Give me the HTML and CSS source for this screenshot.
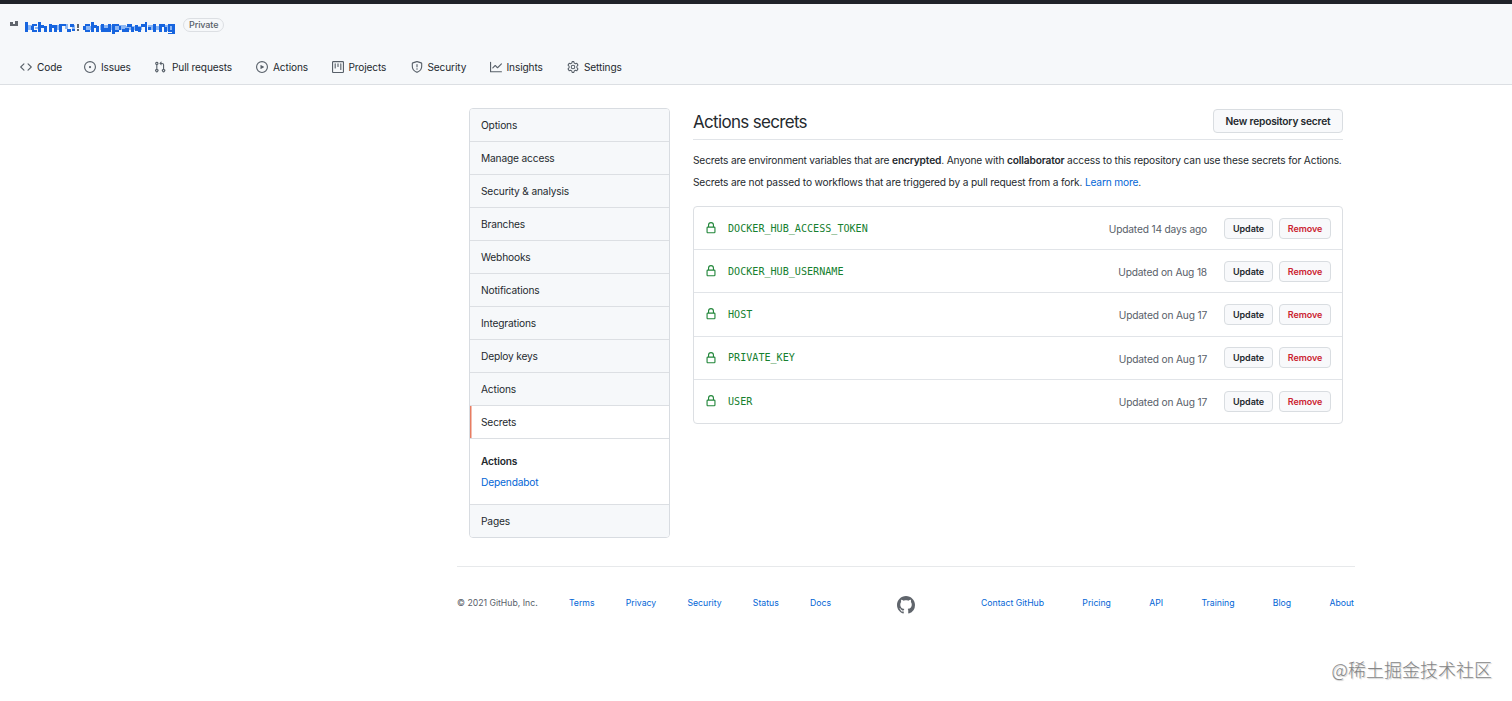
FILE: index.html
```html
<!DOCTYPE html>
<html lang="en">
<head>
<meta charset="utf-8">
<title>Actions secrets</title>
<link rel="stylesheet" href="styles.css">
</head>
<body>
<header class="repo-header">
  <div class="repo-title">
    <svg class="repo-name" width="166" height="16" viewBox="0 0 166 16" shape-rendering="crispEdges">
      <path fill="#60656c" d="M0 3h3v4H0zM5 2h3v5H5zM3 5h2v2H3zM67 5h2v4h-2zM67 10h2v2h-2z"/>
      <path fill="#8db7f3" d="M18 6h4v5h-4zM25 8h3v2h-3zM47 6h4v5h-4zM55 5h3v5h-3zM62 6h3v4h-3zM76 7h5v4h-5zM90 6h26v5H90zM115 7h17v4h-17zM138 6h5v5h-5zM146 7h3v4h-3zM155 6h9v6h-9z"/>
      <path fill="#1765df" d="M15 3h3v10h-3zM22 5h5v2h-5zM21 7h3v4h-3zM22 11h5v2h-5zM28 3h3v10h-3zM31 6h3v3h-3zM34 7h3v6h-3zM39 5h3v8h-3zM42 6h5v3h-5zM44 9h3v4h-3zM49 5h3v8h-3zM52 5h4v2h-4zM57 10h4v3h-4zM60 5h4v3h-4zM62 10h3v2h-3zM75 5h5v2h-5zM73 7h3v4h-3zM75 11h5v2h-5zM81 3h3v10h-3zM84 6h3v3h-3zM86 7h3v6h-3zM91 5h3v8h-3zM94 9h5v4h-5zM98 5h3v8h-3zM102 5h3v10h-3zM105 5h4v2h-4zM105 11h4v2h-4zM109 7h2v4h-2zM112 10h4v3h-4zM117 5h5v3h-5zM115 9h4v4h-4zM121 8h3v5h-3zM125 6h3v6h-3zM128 8h3v5h-3zM131 5h4v3h-4zM135 3h2v10h-2zM138 8h3v3h-3zM143 5h3v8h-3zM149 5h3v8h-3zM152 5h3v3h-3zM154 8h3v5h-3zM158 5h7v2h-7zM158 7h2v4h-2zM158 11h6v2h-6zM162 5h3v10h-3zM158 14h5v1h-5z"/>
    </svg>
    <span class="label">Private</span>
  </div>
  <nav class="tabs">
    <a class="tab tab-code"><svg class="icon" viewBox="0 0 16 16"><path fill-rule="evenodd" d="M4.72 3.22a.75.75 0 011.06 1.06L2.06 8l3.72 3.72a.75.75 0 11-1.06 1.06L.47 8.53a.75.75 0 010-1.06l4.25-4.25zm6.56 0a.75.75 0 10-1.06 1.06L13.94 8l-3.72 3.72a.75.75 0 101.06 1.06l4.25-4.25a.75.75 0 000-1.06l-4.25-4.25z"/></svg>Code</a>
    <a class="tab tab-issues"><svg class="icon" viewBox="0 0 16 16"><path d="M8 9.5a1.5 1.5 0 100-3 1.5 1.5 0 000 3z"/><path fill-rule="evenodd" d="M8 0a8 8 0 100 16A8 8 0 008 0zM1.5 8a6.5 6.5 0 1113 0 6.500 6.500 0 01-13 0z"/></svg>Issues</a>
    <a class="tab tab-pulls"><svg class="icon" viewBox="0 0 16 16"><path fill-rule="evenodd" d="M7.177 3.073L9.573.677A.25.25 0 0110 .854v4.792a.25.25 0 01-.427.177L7.177 3.427a.25.25 0 010-.354zM3.750 2.500a.75.75 0 100 1.500.75.75 0 000-1.500zm-2.250.75a2.250 2.250 0 113 2.122v5.256a2.251 2.251 0 11-1.500 0V5.372A2.250 2.250 0 011.500 3.250zM11 2.500h-1V4h1a1 1 0 011 1v5.628a2.251 2.251 0 101.500 0V5A2.500 2.500 0 0011 2.500zm1 10.250a.75.75 0 111.500 0 .75.75 0 01-1.500 0zM3.750 12a.75.75 0 100 1.500.75.75 0 000-1.500z"/></svg>Pull requests</a>
    <a class="tab tab-actions"><svg class="icon" viewBox="0 0 16 16"><path fill-rule="evenodd" d="M1.500 8a6.500 6.500 0 1113 0 6.500 6.500 0 01-13 0zM8 0a8 8 0 100 16A8 8 0 008 0zM6.379 5.227A.25.25 0 006 5.442v5.117a.25.25 0 00.379.214l4.264-2.559a.25.25 0 000-.428L6.379 5.227z"/></svg>Actions</a>
    <a class="tab tab-projects"><svg class="icon" viewBox="0 0 16 16"><path fill-rule="evenodd" d="M1.750 0A1.750 1.750 0 000 1.750v12.500C0 15.216.784 16 1.750 16h12.500A1.750 1.750 0 0016 14.250V1.750A1.750 1.750 0 0014.250 0H1.750zM1.500 1.750a.25.25 0 01.25-.25h12.500a.25.25 0 01.25.25v12.500a.25.25 0 01-.25.25H1.750a.25.25 0 01-.25-.25V1.750zM11.750 3a.75.75 0 00-.75.75v7.500a.75.75 0 001.500 0v-7.500a.75.75 0 00-.75-.75zm-8.250.75a.75.75 0 011.500 0v5.500a.75.75 0 01-1.500 0v-5.500zM8 3a.75.75 0 00-.75.75v3.500a.75.75 0 001.500 0v-3.500A.75.75 0 008 3z"/></svg>Projects</a>
    <a class="tab tab-security"><svg class="icon" viewBox="0 0 16 16"><path fill-rule="evenodd" d="M7.467.133a1.750 1.750 0 011.066 0l5.250 1.680A1.750 1.750 0 0115 3.480V7c0 1.566-.32 3.182-1.303 4.682-.983 1.498-2.585 2.813-5.032 3.855a1.700 1.700 0 01-1.330 0c-2.447-1.042-4.049-2.357-5.032-3.855C1.320 10.182 1 8.566 1 7V3.480a1.750 1.750 0 011.217-1.667l5.250-1.680zm.61 1.429a.25.25 0 00-.153 0l-5.250 1.680a.25.25 0 00-.174.238V7c0 1.358.275 2.666 1.057 3.860.784 1.194 2.121 2.340 4.366 3.297a.2.2 0 00.154 0c2.245-.956 3.582-2.104 4.366-3.298C13.225 9.666 13.500 8.360 13.500 7V3.480a.25.25 0 00-.174-.237l-5.250-1.680zM9 10.500a1 1 0 11-2 0 1 1 0 012 0zm-.25-5.750a.75.75 0 10-1.500 0v3a.75.75 0 001.500 0v-3z"/></svg>Security</a>
    <a class="tab tab-insights"><svg class="icon" viewBox="0 0 16 16"><path fill-rule="evenodd" d="M1.500 1.750a.75.75 0 00-1.500 0v12.500c0 .414.336.75.75.75h14.500a.75.75 0 000-1.500H1.500V1.750zm14.280 2.530a.75.75 0 00-1.060-1.060L10 7.940 7.530 5.470a.75.75 0 00-1.060 0L3.220 8.720a.75.75 0 001.060 1.060L7 7.060l2.470 2.470a.75.75 0 001.060 0l5.250-5.250z"/></svg>Insights</a>
    <a class="tab tab-settings"><svg class="icon gear" viewBox="0 0 16 16"><path d="M6.900.8h2.200l.6 2 1.400.8 2-.5 1.500 2.400-1.400 1.500v2l1.400 1.500-1.500 2.400-2-.5-1.400.8-.6 2H6.900l-.6-2-1.400-.8-2 .5-1.500-2.400L2.800 9V7L1.400 5.500l1.500-2.400 2 .5 1.400-.8z"/><circle cx="8" cy="8" r="2.400"/></svg>Settings</a>
  </nav>
</header>
<main class="layout">
  <div class="content">
    <nav class="menu">
      <a class="menu-item">Options</a>
      <a class="menu-item">Manage access</a>
      <a class="menu-item">Security &amp; analysis</a>
      <a class="menu-item">Branches</a>
      <a class="menu-item">Webhooks</a>
      <a class="menu-item">Notifications</a>
      <a class="menu-item">Integrations</a>
      <a class="menu-item">Deploy keys</a>
      <a class="menu-item">Actions</a>
      <a class="menu-item selected">Secrets</a>
      <div class="submenu"><b>Actions</b><a class="link">Dependabot</a></div>
      <a class="menu-item">Pages</a>
    </nav>
    <section class="secrets">
      <div class="subhead"><h1>Actions secrets</h1><button class="btn btn-new">New repository secret</button></div>
      <p class="intro intro-first">Secrets are environment variables that are <b>encrypted</b>. Anyone with <b>collaborator</b> access to this repository can use these secrets for Actions.</p>
      <p class="intro">Secrets are not passed to workflows that are triggered by a pull request from a fork. <a class="link">Learn more</a>.</p>
      <ul class="box">
        <li class="row"><svg class="lock" viewBox="0 0 16 16"><path fill-rule="evenodd" d="M4 4v2h-.25A1.750 1.750 0 002 7.750v5.500c0 .966.784 1.750 1.750 1.750h8.500A1.750 1.750 0 0014 13.250v-5.500A1.750 1.750 0 0012.250 6H12V4a4 4 0 10-8 0zm6.500 2V4a2.500 2.500 0 10-5 0v2h5zM12 7.500h.25a.25.25 0 01.25.25v5.500a.25.25 0 01-.25.25h-8.500a.25.25 0 01-.25-.25v-5.500a.25.25 0 01.25-.25H12z"/></svg><code>DOCKER_HUB_ACCESS_TOKEN</code><span class="date">Updated 14 days ago</span><button class="btn btn-sm">Update</button><button class="btn btn-sm danger">Remove</button></li>
        <li class="row"><svg class="lock" viewBox="0 0 16 16"><path fill-rule="evenodd" d="M4 4v2h-.25A1.750 1.750 0 002 7.750v5.500c0 .966.784 1.750 1.750 1.750h8.500A1.750 1.750 0 0014 13.250v-5.500A1.750 1.750 0 0012.250 6H12V4a4 4 0 10-8 0zm6.500 2V4a2.500 2.500 0 10-5 0v2h5zM12 7.500h.25a.25.25 0 01.25.25v5.500a.25.25 0 01-.25.25h-8.500a.25.25 0 01-.25-.25v-5.500a.25.25 0 01.25-.25H12z"/></svg><code>DOCKER_HUB_USERNAME</code><span class="date">Updated on Aug 18</span><button class="btn btn-sm">Update</button><button class="btn btn-sm danger">Remove</button></li>
        <li class="row"><svg class="lock" viewBox="0 0 16 16"><path fill-rule="evenodd" d="M4 4v2h-.25A1.750 1.750 0 002 7.750v5.500c0 .966.784 1.750 1.750 1.750h8.500A1.750 1.750 0 0014 13.250v-5.500A1.750 1.750 0 0012.250 6H12V4a4 4 0 10-8 0zm6.500 2V4a2.500 2.500 0 10-5 0v2h5zM12 7.500h.25a.25.25 0 01.25.25v5.500a.25.25 0 01-.25.25h-8.500a.25.25 0 01-.25-.25v-5.500a.25.25 0 01.25-.25H12z"/></svg><code>HOST</code><span class="date">Updated on Aug 17</span><button class="btn btn-sm">Update</button><button class="btn btn-sm danger">Remove</button></li>
        <li class="row"><svg class="lock" viewBox="0 0 16 16"><path fill-rule="evenodd" d="M4 4v2h-.25A1.750 1.750 0 002 7.750v5.500c0 .966.784 1.750 1.750 1.750h8.500A1.750 1.750 0 0014 13.250v-5.500A1.750 1.750 0 0012.250 6H12V4a4 4 0 10-8 0zm6.500 2V4a2.500 2.500 0 10-5 0v2h5zM12 7.500h.25a.25.25 0 01.25.25v5.500a.25.25 0 01-.25.25h-8.500a.25.25 0 01-.25-.25v-5.500a.25.25 0 01.25-.25H12z"/></svg><code>PRIVATE_KEY</code><span class="date">Updated on Aug 17</span><button class="btn btn-sm">Update</button><button class="btn btn-sm danger">Remove</button></li>
        <li class="row"><svg class="lock" viewBox="0 0 16 16"><path fill-rule="evenodd" d="M4 4v2h-.25A1.750 1.750 0 002 7.750v5.500c0 .966.784 1.750 1.750 1.750h8.500A1.750 1.750 0 0014 13.250v-5.500A1.750 1.750 0 0012.250 6H12V4a4 4 0 10-8 0zm6.500 2V4a2.500 2.500 0 10-5 0v2h5zM12 7.500h.25a.25.25 0 01.25.25v5.500a.25.25 0 01-.25.25h-8.500a.25.25 0 01-.25-.25v-5.500a.25.25 0 01.25-.25H12z"/></svg><code>USER</code><span class="date">Updated on Aug 17</span><button class="btn btn-sm">Update</button><button class="btn btn-sm danger">Remove</button></li>
      </ul>
    </section>
  </div>
  <footer class="footer">
    <div class="links left"><span class="copyright">© 2021 GitHub, Inc.</span><a>Terms</a><a>Privacy</a><a>Security</a><a>Status</a><a>Docs</a></div>
    <svg class="mark" viewBox="0 0 16 16"><path fill-rule="evenodd" d="M8 0C3.580 0 0 3.580 0 8c0 3.540 2.290 6.530 5.470 7.590.4.070.55-.17.55-.38 0-.19-.01-.82-.01-1.490-2.010.37-2.530-.49-2.690-.94-.09-.23-.48-.94-.82-1.130-.28-.15-.68-.52-.01-.53.63-.01 1.080.58 1.230.82.72 1.210 1.870.87 2.330.66.070-.52.28-.87.51-1.070-1.780-.2-3.640-.89-3.640-3.950 0-.87.31-1.590.82-2.150-.08-.2-.36-1.020.08-2.120 0 0 .67-.21 2.200.82.64-.18 1.320-.27 2-.27.68 0 1.360.09 2 .27 1.530-1.040 2.200-.82 2.200-.82.44 1.100.16 1.920.08 2.120.51.56.82 1.270.82 2.150 0 3.070-1.870 3.750-3.650 3.950.29.25.54.73.54 1.480 0 1.070-.01 1.930-.01 2.200 0 .21.15.46.55.38A8.013 8.013 0 0016 8c0-4.420-3.580-8-8-8z"/></svg>
    <div class="links right"><a>Contact GitHub</a><a>Pricing</a><a>API</a><a>Training</a><a>Blog</a><a>About</a></div>
  </footer>
</main>
<div class="watermark">@稀土掘金技术社区</div>
</body>
</html>
```
FILE: styles.css
```css
* { box-sizing: border-box; }
body {
  margin: 0;
  height: 701px;
  overflow: hidden;
  background: #fff;
  color: #24292e;
  font-family: Inter, "Liberation Sans", sans-serif;
  font-size: 10.2px;
  letter-spacing: -.17px;
  line-height: 16px;
}
.repo-header {
  height: 85px;
  border-top: 4px solid #202329;
  border-bottom: 1px solid #dcdfe3;
  background: #f6f8fa;
}
.repo-title { display: flex; align-items: center; height: 42px; padding-left: 10px; }
.repo-name { margin-top: 4px; }
.label {
  height: 14px;
  margin-left: 7px;
  padding: 0 5px;
  border: 1px solid #dcdfe3;
  border-radius: 8px;
  font-size: 9px;
  font-weight: 500;
  line-height: 12px;
  letter-spacing: -.1px;
  color: #586069;
}
.tabs { display: flex; height: 42px; padding-left: 20px; align-items: center; }
.tab { display: flex; align-items: center; gap: 5px; white-space: nowrap; letter-spacing: -.12px; font-size: 10.1px; }
.icon { width: 12px; height: 12px; fill: #586069; }
.gear { fill: none; stroke: #586069; stroke-width: 1.4; stroke-linejoin: round; }
.tab-code { width: 64px; }
.tab-issues { width: 70px; }
.tab-pulls { width: 102px; gap: 6px; }
.tab-actions { width: 75.5px; }
.tab-projects { width: 79px; }
.tab-security { width: 79px; }
.tab-insights { width: 77.5px; }
.layout { width: 898px; margin: 23px 0 0 457px; }
.content { display: flex; gap: 23px; padding-left: 12px; height: 458px; }
.menu {
  width: 201px;
  height: 430px;
  border: 1px solid #d8dce1;
  border-radius: 4px;
  overflow: hidden;
}
.menu-item {
  display: block;
  height: 33.06px;
  padding: 8px 11px;
  border-bottom: 1px solid #dcdfe3;
  background: #f6f8fa;
}
.menu-item:last-child { border-bottom: 0; }
.selected { background: #fff; box-shadow: inset 1.5px 0 #e77d62; }
.submenu { display: flex; flex-direction: column; gap: 5px; height: 65.3px; padding: 14px 11px; border-bottom: 1px solid #dcdfe3; }
b { font-weight: 600; }
.link { color: #0366d6; }
.secrets { width: 650px; }
.subhead { display: flex; justify-content: space-between; height: 32px; padding-top: 1px; border-bottom: 1px solid #e1e4e8; }
h1 { margin: 0; font-size: 17px; font-weight: 400; line-height: 26px; letter-spacing: -.68px; }
.btn {
  padding: 0;
  border: 1px solid #d9dde1;
  border-radius: 4px;
  background: #f8f9fb;
  color: #24292e;
  font-family: inherit;
  font-weight: 600;
}
.btn-new { width: 130px; height: 24px; font-size: 10.2px; letter-spacing: -.19px; }
.intro { margin: 0; line-height: 22px; white-space: nowrap; }
.intro-first { margin-top: 9px; }
.box { margin: 13px 0 0; padding: 0; list-style: none; border: 1px solid #dcdfe3; border-radius: 4px; }
.row { display: flex; align-items: center; height: 43.2px; padding: 0 11px; border-bottom: 1px solid #e1e4e8; }
.row:last-child { border-bottom: 0; }
.lock { width: 12px; height: 12px; margin-right: 11px; fill: #22863a; }
code { font: 10.1px "DejaVu Sans Mono", monospace; letter-spacing: 0; color: #16802f; }
.date { margin: 2px 17px 0 auto; color: #586069; }
.btn-sm { width: 49px; height: 21px; font-size: 9px; letter-spacing: -.1px; }
.danger { width: 52px; margin-left: 6px; color: #cb2431; }
.footer { display: flex; border-top: 1px solid #e7e9eb; font-size: 8.7px; letter-spacing: 0; color: #586069; }
.links { display: flex; justify-content: space-between; padding-top: 28px; }
.links a { color: #0366d6; }
.left { width: 374px; }
.mark { width: 18px; height: 18px; margin: 29px 66px 0; fill: #60656c; }
.right { width: 373px; }
.watermark {
  position: absolute;
  right: 20px;
  top: 657px;
  font: 300 18px/24px "Noto Sans CJK SC", sans-serif;
  letter-spacing: 0;
  color: #858585;
  text-shadow: 1px 1px 1px #ccc;
}
```
